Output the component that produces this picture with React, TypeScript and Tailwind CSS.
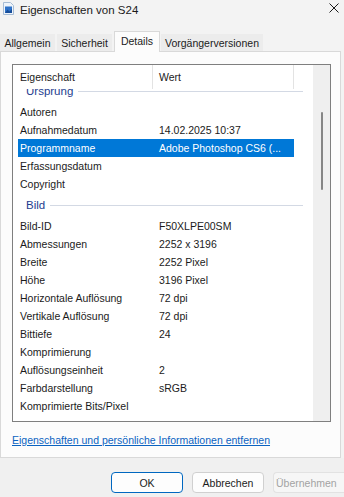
import clsx from 'clsx';

const ursprung: [string, string][] = [
  ['Autoren', ''],
  ['Aufnahmedatum', '14.02.2025 10:37'],
  ['Programmname', 'Adobe Photoshop CS6 (...'],
  ['Erfassungsdatum', ''],
  ['Copyright', ''],
];

const bild: [string, string][] = [
  ['Bild-ID', 'F50XLPE00SM'],
  ['Abmessungen', '2252 x 3196'],
  ['Breite', '2252 Pixel'],
  ['Höhe', '3196 Pixel'],
  ['Horizontale Auflösung', '72 dpi'],
  ['Vertikale Auflösung', '72 dpi'],
  ['Bittiefe', '24'],
  ['Komprimierung', ''],
  ['Auflösungseinheit', '2'],
  ['Farbdarstellung', 'sRGB'],
  ['Komprimierte Bits/Pixel', ''],
];

function Row({ name, value, selected }: { name: string; value: string; selected?: boolean }) {
  return (
    <div
      className={clsx(
        'ml-[5px] flex h-[18px] w-[276px] items-center whitespace-nowrap',
        selected ? 'bg-[#0078d7] text-white' : 'text-[#1b1b1b]'
      )}
    >
      <span className="w-[141px] shrink-0 pl-[2px]">{name}</span>
      <span>{value}</span>
    </div>
  );
}

function Group({ label }: { label: string }) {
  return (
    <div className="flex h-[24px] items-center pl-[13px] pr-[10px]">
      <span className="text-[11.5px] text-[#1e3d8f]">{label}</span>
      <div className="ml-[5px] h-px flex-1 bg-[#d3d9e4]" />
    </div>
  );
}

function Tab({ label, width, active }: { label: string; width: string; active?: boolean }) {
  return (
    <div
      className={clsx(
        'flex items-center justify-center',
        width,
        active
          ? 'relative z-10 -mb-px h-[21px] border border-b-0 border-[#d9d9d9] bg-[#fcfcfc] pb-[3px]'
          : 'h-[17px] bg-[#ececec]'
      )}
    >
      {label}
    </div>
  );
}

export default function App() {
  return (
    <div className="flex h-[497px] w-[344px] flex-col overflow-hidden bg-[#f3f3f3] font-['Liberation_Sans',Arial,sans-serif] text-[10.5px] leading-[14px] text-[#1b1b1b]">
      {/* title bar */}
      <div className="flex h-[31px] shrink-0 items-start px-[3px] pt-[2px]">
        <svg width="11" height="13" viewBox="0 0 11 13">
          <path d="M0.5 0.5h7l3 3v9h-10z" fill="#eef4fb" stroke="#a7bcd4" />
          <rect x="2" y="4.5" width="7" height="6.5" fill="#2f72c8" />
          <path d="M2 11l2.5-3.5 2 2 2.5-2.5v4z" fill="#164c99" />
        </svg>
        <span className="ml-[6px] mt-px text-[11.5px] text-[#1a1a1a]">Eigenschaften von S24</span>
        <svg className="ml-auto mr-[2px] mt-px" width="10" height="10" viewBox="0 0 10 10">
          <path d="M0.5 0.5l9 9M9.5 0.5l-9 9" stroke="#1a1a1a" strokeWidth="1" />
        </svg>
      </div>

      {/* tabs */}
      <div className="flex h-[20px] shrink-0 items-end">
        <Tab label="Allgemein" width="w-[55px]" />
        <div className="w-[2px]" />
        <Tab label="Sicherheit" width="w-[55px]" />
        <div className="w-[2px]" />
        <Tab label="Details" width="w-[46px]" active />
        <div className="w-px" />
        <Tab label="Vorgängerversionen" width="w-[102px]" />
      </div>

      {/* tab page */}
      <div className="flex h-[407px] w-[341px] shrink-0 flex-col border border-[#d9d9d9] bg-[#fcfcfc] pl-[11px] pt-[12px]">
        <div className="flex h-[358px] w-[319px] border border-[#7f7f7f] bg-white">
          <div className="flex min-w-0 flex-1 flex-col">
            <div className="flex h-[24px] shrink-0">
              <div className="flex w-[140px] items-center border-r border-[#e3e3e3] pl-[7px]">Eigenschaft</div>
              <div className="flex w-[141px] items-center border-r border-[#e3e3e3] pl-[6px]">Wert</div>
            </div>
            <div className="flex-1 overflow-hidden">
              <div className="-mt-[10px]">
                <Group label="Ursprung" />
                {ursprung.map(([n, v]) => (
                  <Row key={n} name={n} value={v} selected={n === 'Programmname'} />
                ))}
                <Group label="Bild" />
                {bild.map(([n, v]) => (
                  <Row key={n} name={n} value={v} />
                ))}
              </div>
            </div>
          </div>
          <div className="flex w-[17px] flex-col items-center bg-[#efefef] pt-[47px]">
            <div className="h-[78px] w-[2px] rounded-full bg-[#868686]" />
          </div>
        </div>
        <a className="mt-[11px] w-fit text-[#0b63c1] underline" href="#">
          Eigenschaften und persönliche Informationen entfernen
        </a>
      </div>

      {/* footer */}
      <div className="flex flex-1 justify-end gap-[9px] bg-[#f0f0f0] pt-[14px]">
        <button className="h-[21px] w-[72px] rounded-[4px] border border-[#0067c0] bg-[#fdfdfd] text-[#1b1b1b]">OK</button>
        <button className="h-[21px] w-[72px] rounded-[4px] border border-[#d0d0d0] bg-[#fdfdfd] text-[#1b1b1b]">Abbrechen</button>
        <button className="h-[21px] w-[71px] rounded-l-[4px] border border-r-0 border-[#e2e2e2] bg-[#f6f6f6] text-left pl-[2px] text-[#a3a3a3]">Übernehmen</button>
      </div>
    </div>
  );
}
